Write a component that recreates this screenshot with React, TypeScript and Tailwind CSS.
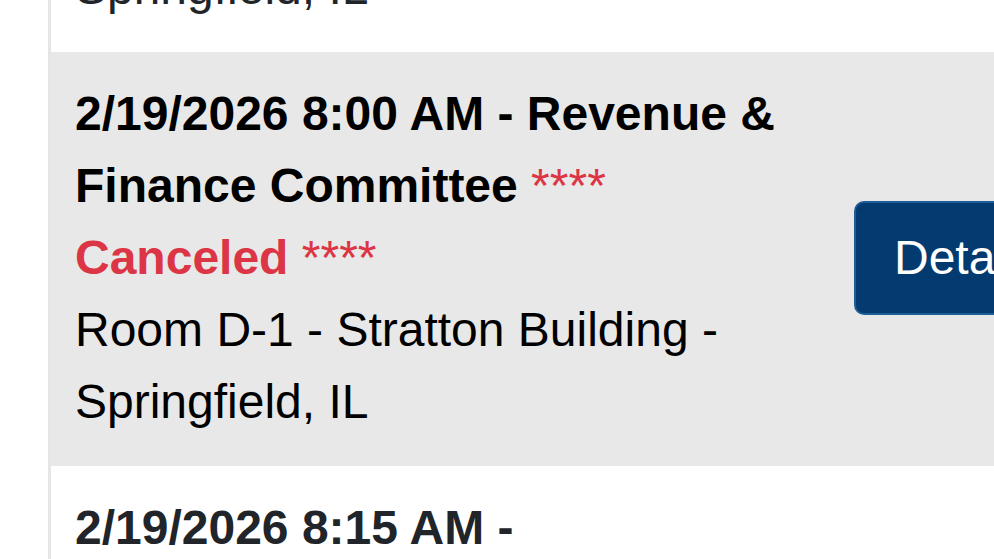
const meetings = [
  {
    id: 1,
    title: "2/19/2026 7:30 AM - Executive Committee",
    location: "Room D-1 - Stratton Building - Springfield, IL",
    canceled: false,
  },
  {
    id: 2,
    title: "2/19/2026 8:00 AM - Revenue & Finance Committee",
    location: "Room D-1 - Stratton Building - Springfield, IL",
    canceled: true,
  },
  {
    id: 3,
    title: "2/19/2026 8:15 AM - Appropriations-Education Committee",
    location: "Room C-1 - Stratton Building - Springfield, IL",
    canceled: false,
  },
];

const MeetingRow = ({ m, active }: { m: (typeof meetings)[number]; active: boolean }) => {
  return (
    <div
      className={
        "flex shrink-0 items-center pl-[24px] pt-[26px] pb-[28px] " +
        (active ? "bg-[#e8e8e8]" : "bg-white")
      }
    >
      <div className="w-[735px] shrink-0 text-[48px] leading-[72px]">
        <p className={"font-bold " + (active ? "text-black" : "text-[#212529]")}>
          {m.title}
          {m.canceled && (
            <>
              {" "}
              <span className="font-normal text-[#dc3545]">****</span>{" "}
              <span className="text-[#dc3545]">Canceled</span>{" "}
              <span className="font-normal text-[#dc3545]">****</span>
            </>
          )}
        </p>
        <p className={active ? "text-black" : "text-[#212529]"}>{m.location}</p>
      </div>
      <button className="ml-[44px] shrink-0 rounded-[10px] border-2 border-[#1b5c99] bg-[#033a6f] px-[38px] py-[19px] text-[48px] leading-[72px] text-white">
        Details
      </button>
    </div>
  );
};

export default function App() {
  return (
    <div
      className="h-[559px] w-[994px] overflow-hidden bg-white"
      style={{ fontFamily: '"Liberation Sans", Arial, sans-serif' }}
    >
      {/* scrolled list: first row is mostly above the fold */}
      <div className="ml-[48px] -mt-[290px] flex w-[1200px] flex-col border-l-[3px] border-[#e6e6e6]">
        {meetings.map((m) => (
          <MeetingRow key={m.id} m={m} active={m.canceled} />
        ))}
      </div>
    </div>
  );
}
